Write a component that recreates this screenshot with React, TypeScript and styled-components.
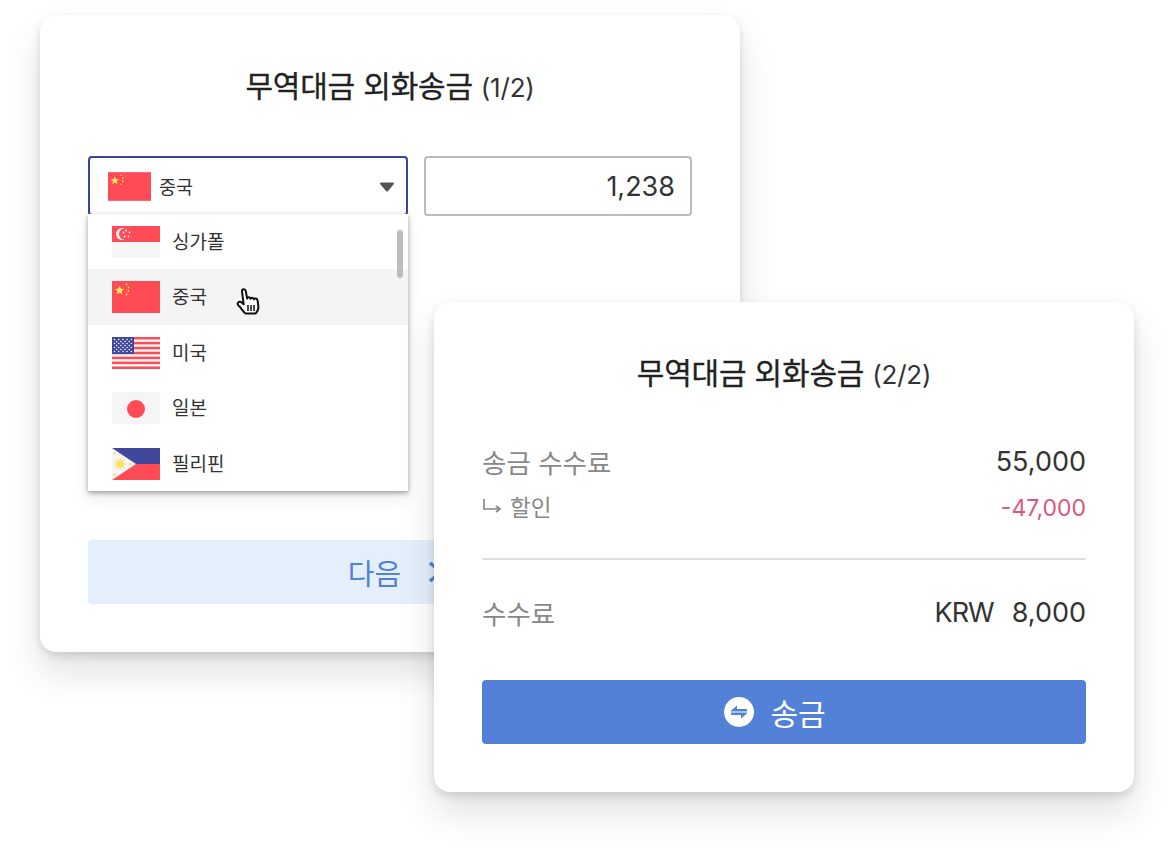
import React from 'react';
import styled, { createGlobalStyle } from 'styled-components';

const GlobalStyle = createGlobalStyle`
  html, body {
    margin: 0;
    padding: 0;
    background: #ffffff;
    overflow: hidden;
  }
  body {
    font-family: 'Inter', 'Noto Sans CJK KR', sans-serif;
    color: #333333;
  }
`;

const Stage = styled.div`
  position: relative;
  width: 1174px;
  height: 856px;
  overflow: hidden;
`;

const Card = styled.section<{ $left: number; $top: number; $height: number }>`
  position: absolute;
  left: ${p => p.$left}px;
  top: ${p => p.$top}px;
  width: 700px;
  height: ${p => p.$height}px;
  box-sizing: border-box;
  padding: 48px;
  background: #ffffff;
  border-radius: 16px;
  box-shadow: 0 4px 8px rgba(0, 0, 0, 0.12), 0 20px 36px rgba(0, 0, 0, 0.12);
  display: flex;
  flex-direction: column;
`;

const Title = styled.h2`
  margin: 0;
  height: 46px;
  display: flex;
  align-items: baseline;
  justify-content: center;
  gap: 8px;
  font-size: 30px;
  line-height: 46px;
  font-weight: 400;
  -webkit-text-stroke: 0.3px #222222;
  color: #222222;
  letter-spacing: -0.2px;
`;

const TitleStep = styled.span`
  font-size: 26px;
  font-weight: 400;
  -webkit-text-stroke: 0;
  color: #333333;
`;

const FieldRow = styled.div`
  position: relative;
  display: flex;
  gap: 16px;
  margin-top: 47px;
`;

const SelectWrap = styled.div`
  position: relative;
  width: 320px;
`;

const SelectBox = styled.div`
  box-sizing: border-box;
  height: 60px;
  display: flex;
  align-items: center;
  padding: 0 11px 0 18px;
  border: 2px solid #3c4696;
  border-radius: 4px;
  font-size: 18.5px;
  color: #333333;
`;

const SelectFlag = styled.span`
  display: flex;
  margin-right: 8px;
`;

const Caret = styled.svg`
  margin-left: auto;
  margin-top: 1px;
`;

const AmountInput = styled.div`
  box-sizing: border-box;
  width: 268px;
  height: 60px;
  display: flex;
  align-items: center;
  justify-content: flex-end;
  padding: 0 15px;
  border: 2px solid #bbbbbb;
  border-radius: 4px;
  font-size: 27px;
  color: #333333;
`;

const Menu = styled.ul`
  position: absolute;
  left: 0;
  top: 58px;
  width: 320px;
  height: 277px;
  margin: 0;
  padding: 0;
  list-style: none;
  background: #ffffff;
  overflow: hidden;
  box-shadow: 0 2px 5px rgba(0, 0, 0, 0.36), 0 8px 16px rgba(0, 0, 0, 0.07);
`;

const MenuItem = styled.li<{ $active?: boolean; $height: number }>`
  box-sizing: border-box;
  height: ${p => p.$height}px;
  display: flex;
  align-items: center;
  gap: 12px;
  padding-left: 24px;
  font-size: 19px;
  color: #333333;
  background: ${p => (p.$active ? '#f4f4f4' : '#ffffff')};
`;

const MenuLabel = styled.span`
  margin-bottom: 3px;
`;

const ScrollThumb = styled.div`
  position: absolute;
  right: 5px;
  top: 16px;
  width: 6px;
  height: 48px;
  border-radius: 3px;
  background: #bdbdbd;
`;

const HandCursor = styled.svg`
  position: absolute;
  left: 148px;
  top: 132px;
`;

const NextButton = styled.div`
  box-sizing: border-box;
  height: 64px;
  margin-top: auto;
  padding-left: 12px;
  display: flex;
  align-items: center;
  justify-content: center;
  gap: 27px;
  border-radius: 4px;
  background: #e3f0fc;
  color: #5381d8;
  font-size: 29px;
`;

const SummaryRow = styled.div<{ $top: number }>`
  display: flex;
  justify-content: space-between;
  align-items: center;
  margin-top: ${p => p.$top}px;
`;

const RowLabel = styled.span<{ $small?: boolean }>`
  display: flex;
  align-items: center;
  gap: 7px;
  margin: ${p => (p.$small ? '-2px 0 2px' : '0')};
  font-size: ${p => (p.$small ? 22.5 : 26.5)}px;
  color: #888888;
`;

const RowValue = styled.span<{ $discount?: boolean }>`
  font-size: ${p => (p.$discount ? 23 : 27)}px;
  color: ${p => (p.$discount ? '#d9587f' : '#333333')};
  display: flex;
  gap: 18px;
`;

const Currency = styled.span`
  letter-spacing: -1px;
`;

const Divider = styled.hr`
  width: 100%;
  height: 2px;
  margin: 34px 0 0;
  border: 0;
  background: #dddddd;
`;

const SendButton = styled.div`
  box-sizing: border-box;
  height: 64px;
  margin-top: auto;
  padding-right: 18px;
  display: flex;
  align-items: center;
  justify-content: center;
  gap: 16px;
  border-radius: 4px;
  background: #5381d8;
  color: #ffffff;
  font-size: 30px;
`;

const ChinaFlag = ({ w = 48, h = 32 }: { w?: number; h?: number }) => (
  <svg width={w} height={h} viewBox="0 0 48 32">
    <rect width="48" height="32" fill="#ff4b55" />
    <polygon fill="#ffe15a" points="7.5,4.500 8.9,7.800 12.400,7.900 9.700,10 10.600,13.400 7.500,11.500 4.500,13.400 5.400,10 2.700,7.900 6.200,7.800" />
    <circle cx="14.500" cy="3.500" r="0.9" fill="#ffe15a" />
    <circle cx="16.500" cy="6.500" r="0.9" fill="#ffe15a" />
    <circle cx="16.500" cy="10" r="0.9" fill="#ffe15a" />
    <circle cx="14.500" cy="13.500" r="0.9" fill="#ffe15a" />
  </svg>
);

const SingaporeFlag = () => (
  <svg width="48" height="32" viewBox="0 0 48 32">
    <rect width="48" height="32" fill="#f5f5f5" />
    <rect width="48" height="16" fill="#ff4b55" />
    <circle cx="10" cy="8" r="6" fill="#f5f5f5" />
    <circle cx="12.500" cy="8" r="5.500" fill="#ff4b55" />
    <g fill="#f5f5f5">
      <circle cx="14" cy="4.500" r="0.9" />
      <circle cx="17.500" cy="6.500" r="0.9" />
      <circle cx="16.500" cy="10.500" r="0.9" />
      <circle cx="12.500" cy="10.500" r="0.9" />
      <circle cx="11.500" cy="6.500" r="0.9" />
    </g>
  </svg>
);

const UsaFlag = () => (
  <svg width="48" height="32" viewBox="0 0 48 32">
    <rect width="48" height="32" fill="#f5f5f5" />
    {[0, 1, 2, 3, 4, 5, 6].map(i => (
      <rect key={i} y={i * 4.92} width="48" height="2.46" fill="#ff4b55" />
    ))}
    <rect width="22" height="17" fill="#41479b" />
    {Array.from({ length: 4 }).map((_, r) =>
      Array.from({ length: 5 }).map((__, c) => (
        <circle key={`${r}-${c}`} cx={2.5 + c * 4.2} cy={2.5 + r * 4} r="0.8" fill="#f5f5f5" />
      ))
    )}
    {Array.from({ length: 3 }).map((_, r) =>
      Array.from({ length: 4 }).map((__, c) => (
        <circle key={`o${r}-${c}`} cx={4.6 + c * 4.2} cy={4.5 + r * 4} r="0.8" fill="#f5f5f5" />
      ))
    )}
  </svg>
);

const JapanFlag = () => (
  <svg width="48" height="32" viewBox="0 0 48 32">
    <rect width="48" height="32" fill="#f5f5f5" />
    <circle cx="24" cy="17" r="9" fill="#ff4b55" />
  </svg>
);

const PhilippinesFlag = () => (
  <svg width="48" height="32" viewBox="0 0 48 32">
    <rect width="48" height="16" fill="#41479b" />
    <rect y="16" width="48" height="16" fill="#ff4b55" />
    <polygon points="0,0 24,16 0,32" fill="#f5f5f5" />
    <g stroke="#ffe15a" strokeWidth="1.5">
      <path d="M8 10.500v11M2.500 16h11M4 12l8 8M12 12l-8 8" />
    </g>
    <circle cx="8" cy="16" r="3.500" fill="#ffe15a" />
    <circle cx="2.500" cy="5.500" r="1.300" fill="#ffe15a" />
    <circle cx="2.500" cy="26.500" r="1.300" fill="#ffe15a" />
    <circle cx="18" cy="16" r="1.300" fill="#ffe15a" />
  </svg>
);

const countries = [
  { name: '싱가폴', flag: <SingaporeFlag />, height: 55 },
  { name: '중국', flag: <ChinaFlag />, height: 56, active: true },
  { name: '미국', flag: <UsaFlag />, height: 55 },
  { name: '일본', flag: <JapanFlag />, height: 56 },
  { name: '필리핀', flag: <PhilippinesFlag />, height: 55 },
];

const App: React.FC = () => {
  return (
    <>
      <GlobalStyle />
      <Stage>
        <Card $left={40} $top={15} $height={637}>
          <Title>
            무역대금 외화송금 <TitleStep>(1/2)</TitleStep>
          </Title>
          <FieldRow>
            <SelectWrap>
              <SelectBox>
                <SelectFlag>
                  <ChinaFlag w={43} h={29} />
                </SelectFlag>
                중국
                <Caret width="16" height="10" viewBox="0 0 16 10">
                  <path d="M2 1.500h12L8 8.500z" fill="#555555" stroke="#555555" strokeWidth="2" strokeLinejoin="round" />
                </Caret>
              </SelectBox>
              <Menu>
                {countries.map(c => (
                  <MenuItem key={c.name} $active={c.active} $height={c.height}>
                    {c.flag}
                    <MenuLabel>{c.name}</MenuLabel>
                  </MenuItem>
                ))}
                <ScrollThumb />
              </Menu>
              <HandCursor width="26" height="27" viewBox="0 0 26 27">
                <path
                  d="M6 3.500c-.2-2.800 3.400-3 3.800-.4l1.300 7.400c.5-1.700 3.100-1.500 3.400.3.500-1.500 3.100-1.300 3.400.5.600-1.300 3.300-1 3.600.9l.8 5.800c.4 3.200-.8 5.800-2.800 7.500H9.500C7.500 24 5.200 20 2.300 17.300.6 15.500 2.500 13 5 14l2.700 2.300z"
                  fill="#ffffff"
                  stroke="#111111"
                  strokeWidth="2"
                  strokeLinejoin="round"
                />
                <path d="M12 17v6M15 17v6M18 17v6" stroke="#111111" strokeWidth="1.500" />
              </HandCursor>
            </SelectWrap>
            <AmountInput>1,238</AmountInput>
          </FieldRow>
          <NextButton>
            다음
            <svg width="16" height="24" viewBox="0 0 16 24">
              <path d="M2 3l11 9-11 9" fill="none" stroke="#5381d8" strokeWidth="3.500" />
            </svg>
          </NextButton>
        </Card>

        <Card $left={434} $top={302} $height={490}>
          <Title>
            무역대금 외화송금 <TitleStep>(2/2)</TitleStep>
          </Title>
          <SummaryRow $top={46}>
            <RowLabel>송금 수수료</RowLabel>
            <RowValue>55,000</RowValue>
          </SummaryRow>
          <SummaryRow $top={11}>
            <RowLabel $small>
              <svg width="21" height="16" viewBox="0 0 21 16">
                <path d="M2 1v10h15M14 8l4 3-4 3" fill="none" stroke="#888888" strokeWidth="1.700" />
              </svg>
              할인
            </RowLabel>
            <RowValue $discount>-47,000</RowValue>
          </SummaryRow>
          <Divider />
          <SummaryRow $top={33}>
            <RowLabel>수수료</RowLabel>
            <RowValue>
              <Currency>KRW</Currency>
              <span>8,000</span>
            </RowValue>
          </SummaryRow>
          <SendButton>
            <svg width="30" height="30" viewBox="0 0 30 30">
              <circle cx="15" cy="15" r="15" fill="#ffffff" />
              <path d="M7 13.500l6-5v3.500h10v2.500H7zM23 16.500l-6 5V18H7v-2.500h16z" fill="#5381d8" />
            </svg>
            송금
          </SendButton>
        </Card>
      </Stage>
    </>
  );
};

export default App;
